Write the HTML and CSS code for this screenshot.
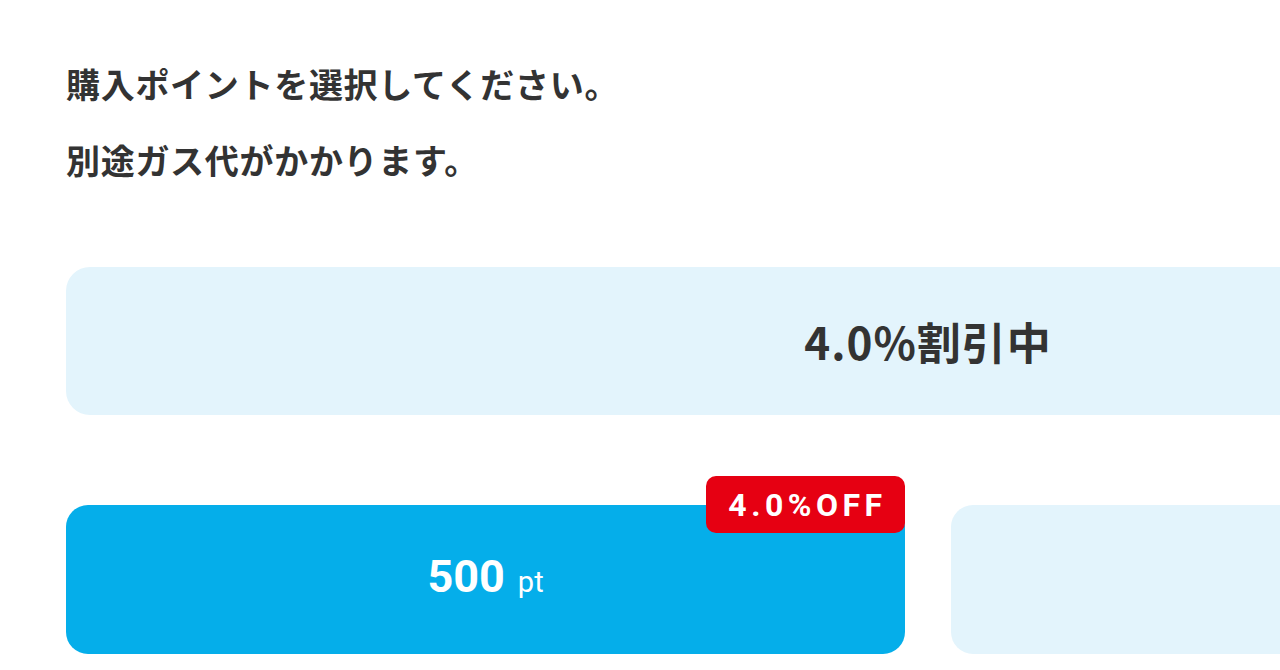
FILE: index.html
```html
<!DOCTYPE html>
<html lang="ja">
<head>
<meta charset="UTF-8">
<meta name="viewport" content="width=device-width, initial-scale=1.0">
<title>ポイント購入</title>
<link rel="stylesheet" href="styles.css">
</head>
<body>
    <div class="page">
        <div class="intro">
            <p>購入ポイントを選択してください。</p>
            <p>別途ガス代がかかります。</p>
        </div>
        <div class="sale">4.0%割引中</div>
        <div class="options">
            <button class="option selected">
                <span class="badge">4.0%OFF</span>
                <span class="amount">500</span><span class="unit">pt</span>
            </button>
            <button class="option"></button>
        </div>
    </div>
</body>
</html>
```

FILE: styles.css
```css
body{
  margin: 0;
  background-color: white;
  overflow: hidden;
  font-family: "Noto Sans CJK JP", sans-serif;
  color: #333333;
}

.page{
  padding: 59px 0 0 66px;
  width: 1724px;
}

.intro{
  display: flex;
  flex-direction: column;
  gap: 26px;
}

.intro p{
  margin: 0;
  font-size: 34px;
  line-height: 50px;
  font-weight: bold;
  letter-spacing: 0.7px;
}

.sale{
  margin-top: 82px;
  height: 148px;
  border-radius: 24px;
  background-color: #e3f4fc;
  display: flex;
  align-items: center;
  justify-content: center;
  font-size: 44px;
  font-weight: bold;
  letter-spacing: 1px;
}

.options{
  display: grid;
  grid-template-columns: 839px 839px;
  gap: 46px;
  margin-top: 90px;
}

.option{
  position: relative;
  height: 149px;
  border: none;
  border-radius: 22px;
  background-color: #e3f4fc;
  font-family: Roboto, "Noto Sans CJK JP", sans-serif;
  color: white;
  display: flex;
  align-items: baseline;
  justify-content: center;
  gap: 13px;
  padding-top: 47px;
}

.option.selected{
  background-color: #05aeea;
}

.amount{
  font-size: 45px;
  font-weight: bold;
  line-height: 50px;
}

.unit{
  font-size: 29px;
  line-height: 50px;
}

.badge{
  position: absolute;
  top: -29px;
  right: 0;
  width: 199px;
  height: 57px;
  border-radius: 10px;
  background-color: #e60012;
  display: flex;
  align-items: center;
  justify-content: center;
  font-size: 32px;
  font-weight: bold;
  letter-spacing: 4.5px;
  padding-left: 4px;
  box-sizing: border-box;
}
```
